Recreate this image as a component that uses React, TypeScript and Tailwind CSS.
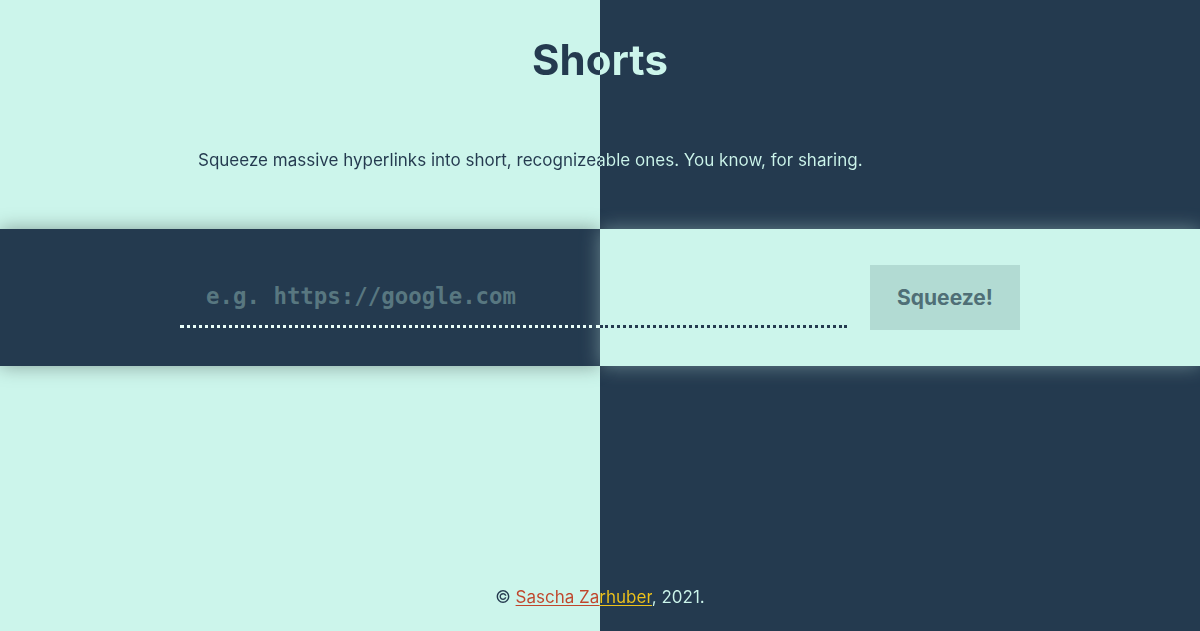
// split text: navy over the left half of the viewport, mint over the right
const splitText =
    "bg-fixed bg-[linear-gradient(to_right,#243a4f_50%,#ccf5eb_50%)] bg-clip-text text-transparent"

const linkText =
    "bg-fixed bg-[linear-gradient(to_right,#c0452b_50%,#efc31a_50%)] bg-clip-text text-transparent underline underline-offset-2"

function SqueezeBar() {
    return (
        <section className="relative h-[137px]">
            <div className="absolute inset-0 grid grid-cols-2">
                <div className="bg-[#243a4f] shadow-[0_0_18px_rgba(0,0,0,0.35)]" />
                <div className="bg-[#ccf5eb] shadow-[0_0_18px_rgba(204,245,235,0.4)]" />
            </div>
            <form
                className="relative mx-auto flex h-full w-[840px] gap-[23px] py-[36px]"
                onSubmit={(e) => e.preventDefault()}
            >
                <div className="flex flex-1 flex-col justify-end pb-[2px]">
                    <input
                        type="url"
                        placeholder="e.g. https://google.com"
                        className="mb-[7px] h-[44px] w-full bg-transparent pl-[26px] font-['DejaVu_Sans_Mono',monospace] text-[22.4px] font-bold text-[#ccf5eb] outline-none placeholder:text-[#587780]"
                    />
                    <div className="flex">
                        <div className="w-[420px] border-b-[3px] border-dotted border-[#eafffa]" />
                        <div className="flex-1 border-b-[3px] border-dotted border-[#243a4f]" />
                    </div>
                </div>
                <button
                    type="submit"
                    className="h-[65px] w-[150px] bg-[#b2dbd3] font-['Inter',sans-serif] text-[21px] font-bold text-[#4f6f76]"
                >
                    Squeeze!
                </button>
            </form>
        </section>
    )
}

export default function App() {
    return (
        <div className="flex h-[631px] flex-col overflow-hidden bg-[linear-gradient(to_right,#ccf5eb_50%,#243a4f_50%)] font-['Inter',sans-serif]">
            <h1 className={`mt-[35px] text-center text-[42px] font-bold leading-[50px] ${splitText}`}>
                Shorts
            </h1>
            <p className={`mx-auto mt-[63px] w-[840px] pl-[18px] text-[17px] leading-6 ${splitText}`}>
                Squeeze massive hyperlinks into short, recognizeable ones. You know, for sharing.
            </p>
            <div className="mt-[57px]">
                <SqueezeBar />
            </div>
            <footer className="mt-auto pb-[22px] text-center text-[17px] leading-6">
                <span className={splitText}>© </span>
                <a href="#">
                    <span className={`${linkText} decoration-[#c0452b]`}>Sascha Za</span>
                    <span className={`${linkText} decoration-[#efc31a]`}>rhuber</span>
                </a>
                <span className={splitText}>, 2021.</span>
            </footer>
        </div>
    )
}
